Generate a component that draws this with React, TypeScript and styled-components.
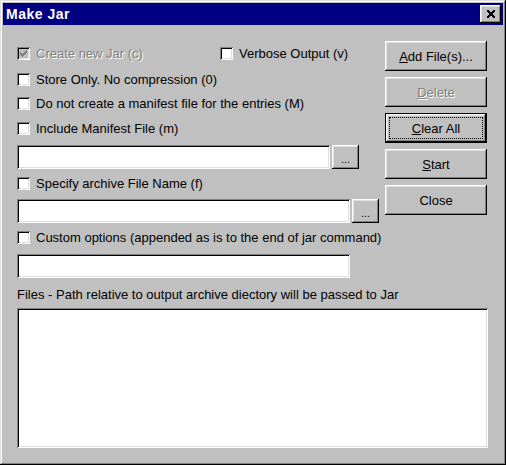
import React from 'react';
import styled, { createGlobalStyle } from 'styled-components';

const Global = createGlobalStyle`
  html, body { margin: 0; padding: 0; background: #c0c0c0; }
  body { font-family: "Liberation Sans", Arial, sans-serif; font-size: 13px; color: #000; }
`;

const Window = styled.div`
  width: 506px;
  height: 465px;
  box-sizing: border-box;
  padding: 3px;
  background: #c0c0c0;
  box-shadow: inset -1px -1px #000, inset 1px 1px #dfdfdf, inset -2px -2px #808080, inset 2px 2px #fff;
  display: flex;
  flex-direction: column;
`;

const TitleBar = styled.div`
  height: 22px;
  background: #000080;
  display: flex;
  align-items: center;
  justify-content: space-between;
  padding: 0 2px 0 3px;
`;

const TitleText = styled.span`
  color: #fff;
  font-weight: bold;
  font-size: 14px;
  letter-spacing: 0.5px;
`;

const CloseBtn = styled.div`
  width: 21px;
  height: 18px;
  box-sizing: border-box;
  background: #c0c0c0;
  box-shadow: inset -1px -1px #000, inset 1px 1px #fff, inset -2px -2px #808080, inset 2px 2px #dfdfdf;
  display: flex;
  align-items: center;
  justify-content: center;
  padding-bottom: 1px;
`;

const Body = styled.div`
  flex: 1;
  padding: 16px 15px 0 14px;
  display: flex;
  flex-direction: column;
`;

const Top = styled.div`
  display: flex;
  gap: 6px;
`;

const LeftCol = styled.div`
  width: 362px;
  display: flex;
  flex-direction: column;
`;

const RightCol = styled.div`
  width: 102px;
  display: flex;
  flex-direction: column;
  gap: 6px;
`;

const Row = styled.div<{ $mt: number }>`
  margin-top: ${(p) => p.$mt}px;
  height: 20px;
  display: flex;
  align-items: center;
`;

const CheckItem = styled.label<{ $w?: number; $disabled?: boolean }>`
  display: flex;
  align-items: center;
  gap: 6px;
  width: ${(p) => (p.$w ? `${p.$w}px` : 'auto')};
  white-space: nowrap;
  color: ${(p) => (p.$disabled ? '#808080' : '#000')};
  text-shadow: ${(p) => (p.$disabled ? '1px 1px 0 #fff' : 'none')};
`;

const Box = styled.span<{ $disabled?: boolean }>`
  width: 13px;
  height: 13px;
  flex: none;
  box-sizing: border-box;
  background: ${(p) => (p.$disabled ? '#c0c0c0' : '#fff')};
  box-shadow: inset 1px 1px #808080, inset -1px -1px #fff, inset 2px 2px #000, inset -2px -2px #dfdfdf;
  display: flex;
`;

const FieldRow = styled.div<{ $mt: number }>`
  margin-top: ${(p) => p.$mt}px;
  display: flex;
  gap: 2px;
`;

const Field = styled.div<{ $w: number; $h?: number }>`
  width: ${(p) => p.$w}px;
  height: ${(p) => p.$h ?? 24}px;
  box-sizing: border-box;
  background: #fff;
  box-shadow: inset 1px 1px #808080, inset -1px -1px #fff, inset 2px 2px #000, inset -2px -2px #dfdfdf;
`;

const Button = styled.div<{ $h: number; $w?: number; $default?: boolean; $disabled?: boolean }>`
  height: ${(p) => p.$h}px;
  width: ${(p) => (p.$w ? `${p.$w}px` : 'auto')};
  box-sizing: border-box;
  background: #c0c0c0;
  padding: 4px;
  display: flex;
  color: ${(p) => (p.$disabled ? '#808080' : '#000')};
  text-shadow: ${(p) => (p.$disabled ? '1px 1px 0 #fff' : 'none')};
  box-shadow: ${(p) =>
    p.$default
      ? 'inset 0 0 0 1px #000, inset -2px -2px #000, inset 2px 2px #fff, inset -3px -3px #808080, inset 3px 3px #dfdfdf'
      : 'inset -1px -1px #000, inset 1px 1px #fff, inset -2px -2px #808080, inset 2px 2px #dfdfdf'};
`;

const Caption = styled.span<{ $focus?: boolean }>`
  flex: 1;
  display: flex;
  align-items: center;
  justify-content: center;
  border: 1px dotted ${(p) => (p.$focus ? '#000' : 'transparent')};
  white-space: nowrap;
`;

const Dots = styled.span`
  font-size: 11px;
  padding-top: 3px;
`;

const Label = styled.div`
  margin-top: 9px;
  height: 16px;
  line-height: 16px;
  white-space: nowrap;
`;

const ListBox = styled(Field)`
  margin-top: 5px;
`;

const CHECK = [
  [6], [5, 6], [0, 4, 5, 6], [0, 1, 3, 4, 5], [0, 1, 2, 3, 4], [1, 2, 3], [2],
];

const CheckMark = ({ color }: { color: string }) => (
  <svg width="13" height="13" shapeRendering="crispEdges">
    {CHECK.flatMap((cols, r) =>
      cols.map((c) => <rect key={`${r}-${c}`} x={3 + c} y={3 + r} width="1" height="1" fill={color} />)
    )}
  </svg>
);

const XGLYPH = [
  [0, 1, 6, 7],
  [0, 1, 2, 5, 6, 7],
  [1, 2, 3, 4, 5, 6],
  [2, 3, 4, 5],
  [2, 3, 4, 5],
  [1, 2, 3, 4, 5, 6],
  [0, 1, 2, 5, 6, 7],
  [0, 1, 6, 7],
];

const CloseGlyph = () => (
  <svg width="8" height="8" shapeRendering="crispEdges">
    {XGLYPH.flatMap((cols, r) =>
      cols.map((c) => <rect key={`${r}-${c}`} x={c} y={r} width="1" height="1" fill="#000" />)
    )}
  </svg>
);

const Check = ({ label, checked, disabled, w }: { label: string; checked?: boolean; disabled?: boolean; w?: number }) => (
  <CheckItem $w={w} $disabled={disabled}>
    <Box $disabled={disabled}>{checked && <CheckMark color={disabled ? '#808080' : '#000'} />}</Box>
    {label}
  </CheckItem>
);

const Browse = () => (
  <Button $h={24} $w={27}>
    <Caption>
      <Dots>...</Dots>
    </Caption>
  </Button>
);

export default function App() {
  return (
    <>
      <Global />
      <Window>
        <TitleBar>
          <TitleText>Make Jar</TitleText>
          <CloseBtn>
            <CloseGlyph />
          </CloseBtn>
        </TitleBar>
        <Body>
          <Top>
            <LeftCol>
              <Row $mt={2}>
                <Check label="Create new Jar (c)" checked disabled w={203} />
                <Check label="Verbose Output (v)" />
              </Row>
              <Row $mt={6}>
                <Check label="Store Only. No compression (0)" />
              </Row>
              <Row $mt={4}>
                <Check label="Do not create a manifest file for the entries (M)" />
              </Row>
              <Row $mt={5}>
                <Check label="Include Manifest File (m)" />
              </Row>
              <FieldRow $mt={7}>
                <Field $w={313} />
                <Browse />
              </FieldRow>
              <Row $mt={4}>
                <Check label="Specify archive File Name (f)" />
              </Row>
              <FieldRow $mt={6}>
                <Field $w={333} />
                <Browse />
              </FieldRow>
              <Row $mt={4}>
                <Check label="Custom options (appended as is to the end of jar command)" />
              </Row>
              <FieldRow $mt={7}>
                <Field $w={333} />
              </FieldRow>
            </LeftCol>
            <RightCol>
              <Button $h={30}>
                <Caption>
                  <u>A</u>dd File(s)...
                </Caption>
              </Button>
              <Button $h={30} $disabled>
                <Caption>
                  <u>D</u>elete
                </Caption>
              </Button>
              <Button $h={30} $default>
                <Caption $focus>
                  <u>C</u>lear All
                </Caption>
              </Button>
              <Button $h={30}>
                <Caption>
                  <u>S</u>tart
                </Caption>
              </Button>
              <Button $h={30}>
                <Caption>Close</Caption>
              </Button>
            </RightCol>
          </Top>
          <Label>Files - Path relative to output archive diectory will be passed to Jar</Label>
          <ListBox $w={471} $h={140} />
        </Body>
      </Window>
    </>
  );
}
